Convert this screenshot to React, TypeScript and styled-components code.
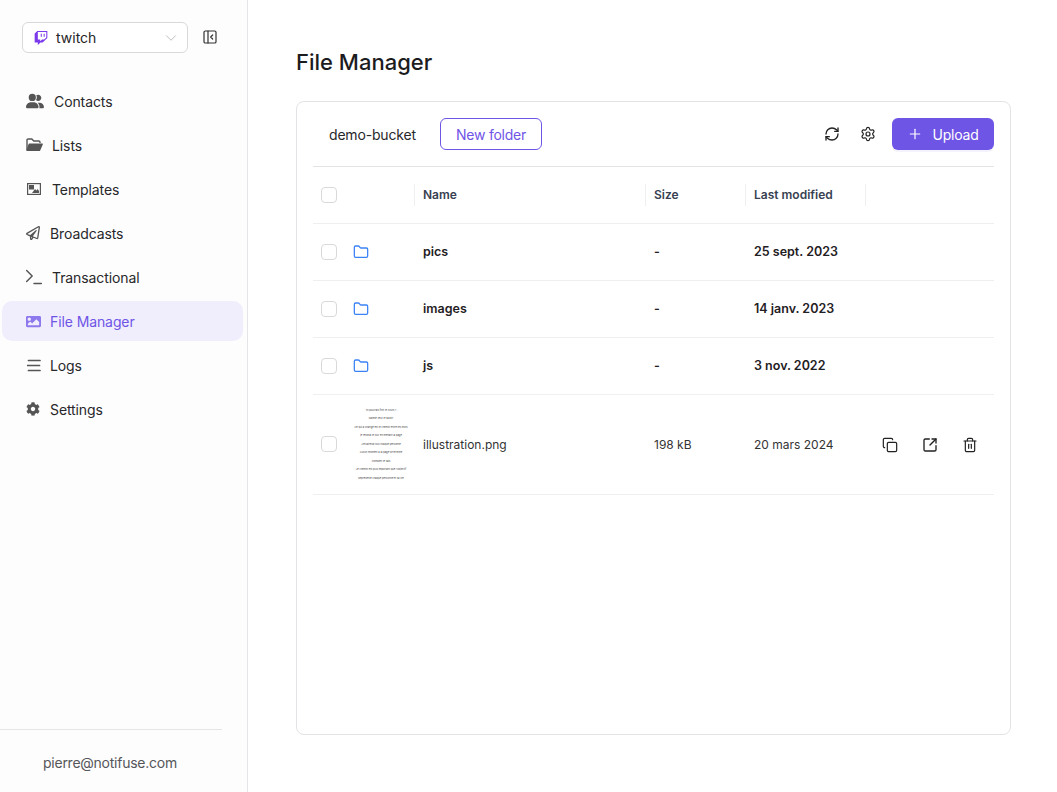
import React from "react";
import styled, { createGlobalStyle } from "styled-components";
import { FaTwitch, FaRegPaperPlane, FaImage, FaCog } from "react-icons/fa";
import { FaUserGroup } from "react-icons/fa6";
import { ChevronDown, PanelLeftClose, RefreshCw, Settings, Plus, Copy, SquareArrowOutUpRight, Trash2, Folder, Terminal } from "lucide-react";

const Global = createGlobalStyle`
  html, body { margin: 0; padding: 0; background: #fff; }
  body { font-family: Inter, "Liberation Sans", sans-serif; color: #1f2023; }
  * { box-sizing: border-box; }
`;
const Page = styled.div`display: flex; width: 1057px; height: 792px; overflow: hidden;`;
const Side = styled.aside`
  width: 248px; flex: none; background: #fdfdfd; border-right: 1px solid #e5e5e8;
  display: flex; flex-direction: column;
`;
const Top = styled.div`display: flex; align-items: center; padding: 22px 0 0 22px; gap: 14px; color: #333;`;
const CollapseIcon = styled.span`display: flex; margin-top: -2px;`;
const Select = styled.div`
  width: 166px; height: 31px; border: 1px solid #d9d9d9; border-radius: 6px; background: #fff;
  display: flex; align-items: center; padding: 0 7px 0 11px; gap: 8px; font-size: 14px; color: #262626;
  svg:first-child { color: #7c3aed; }
  span { flex: 1; }
  svg:last-child { color: #a8a8a8; }
`;
const Nav = styled.nav`display: flex; flex-direction: column; gap: 4px; padding: 28px 4px 0 2px; flex: 1;`;
const Item = styled.div<{ $active?: boolean }>`
  height: 40px; display: flex; align-items: center; gap: 10px; padding-left: 24px; border-radius: 10px;
  font-size: 14px; font-weight: 400; letter-spacing: -0.1px;
  color: ${p => (p.$active ? "#6f55e6" : "#28282b")};
  background: ${p => (p.$active ? "#f0edfd" : "transparent")};
  svg { color: ${p => (p.$active ? "#8e78ee" : "#555")}; flex: none; }
`;
const IconSlot = styled.span<{ $w: number }>`
  width: ${p => p.$w}px; display: flex; align-items: center; justify-content: flex-start;
`;
const Foot = styled.div`
  width: 222px; height: 63px; border-top: 1px solid #e5e5e8;
  padding-top: 24px; padding-left: 43px; font-size: 14px; letter-spacing: -0.25px; color: #55565a; line-height: 17px; white-space: nowrap;
`;
const Main = styled.main`flex: 1; padding: 0 46px 57px 48px; display: flex; flex-direction: column;`;
const Title = styled.h1`
  margin: 0; height: 101px; padding-top: 47px; font-size: 22px; line-height: 30px; font-weight: 500; color: #1c1c1f;
`;
const Card = styled.section`
  flex: 1; border: 1px solid #e3e3e6; border-radius: 8px; background: #fff; padding: 16px 16px 0;
`;
const Toolbar = styled.div`
  display: flex; align-items: center; height: 49px; padding-bottom: 17px; border-bottom: 1px solid #e3e3e6;
`;
const Bucket = styled.span`margin: 2px 0 0 16px; width: 111px; font-size: 14px; letter-spacing: -0.18px; color: #28282b;`;
const Outline = styled.button`
  width: 102px; height: 32px; border: 1px solid #6f55e6; border-radius: 6px; background: #fff;
  color: #6f55e6; font: 400 14px Inter, sans-serif; letter-spacing: -0.25px; padding: 2px 0 0;
`;
const Spacer = styled.div`flex: 1;`;
const ToolIcon = styled.span`display: flex; width: 36px; justify-content: center; color: #222;`;
const Primary = styled.button`
  margin-left: 6px; width: 102px; height: 32px; border: 0; border-radius: 6px; background: #6f55e6; color: #fff;
  font: 400 14px Inter, sans-serif; letter-spacing: -0.2px; display: flex; align-items: center; justify-content: center; gap: 9px; padding: 0;
  box-shadow: 0 2px 0 rgba(111,85,230,.08);
  span { margin-top: 2px; }
`;
const Row = styled.div<{ $h: number }>`
  display: grid; grid-template-columns: 32px 69px 231px 100px 120px 1fr; align-items: center;
  height: ${p => p.$h}px; border-bottom: 1px solid #efeff1; font-size: 12px; color: #1f2023;
`;
const HeadCell = styled.div<{ $sep?: boolean }>`
  height: 22px; line-height: 22px; padding-left: 8px; font-size: 12px; font-weight: 600; color: #374151;
  border-left: ${p => (p.$sep ? "1px solid #efeff1" : "0")};
`;
const Check = styled.span<{ $lift?: boolean }>`
  display: block; width: 16px; height: 16px; margin: 0 0 ${p => (p.$lift ? 2 : 0)}px 8px;
  border: 1px solid #d9d9d9; border-radius: 4px; background: #fff;
`;
const Cell = styled.div<{ $bold?: boolean }>`
  padding: 0 0 ${p => (p.$bold ? 2 : 0)}px 9px; font-size: ${p => (p.$bold ? 12.5 : 12)}px; font-weight: ${p => (p.$bold ? 600 : 400)};
  color: ${p => (p.$bold ? "#1f2023" : "#333")};
`;
const IconCell = styled.div`padding-left: 8px; display: flex; color: #3b82f6;`;
const Thumb = styled.div`
  width: 56px; margin-left: 8px; display: flex; flex-direction: column; align-items: center; gap: 4.5px;
  font-size: 2.5px; line-height: 4px; color: #444; white-space: nowrap;
`;
const Actions = styled.div`display: flex; gap: 24px; padding-left: 17px; color: #222;`;

const ListsIcon = () => (
  <svg width="17" height="14" viewBox="0 0 17 14">
    <path d="M1 12V2.2C1 1.5 1.5 1 2.2 1h3.6l2 2h5c.7 0 1.2.5 1.2 1.2V5" fill="none" stroke="currentColor" strokeWidth="1.4" />
    <path d="M3.4 5.600h12.900c.4 0 .7.4.5.8l-2.600 6c-.2.4-.6.6-1 .6H.9c-.4 0-.7-.4-.5-.8l2-5.800c.2-.5.6-.8 1-.8z" fill="currentColor" />
  </svg>
);
const TemplatesIcon = () => (
  <svg width="14" height="12" viewBox="0 0 14 12" style={{ marginLeft: 1 }}>
    <rect x="0.6" y="0.6" width="12.8" height="10.8" fill="none" stroke="currentColor" strokeWidth="1.2" />
    <rect x="2" y="2" width="5" height="4.500" fill="currentColor" />
    <path d="M5 10l3-4 1.500 1.500L10.500 6 12 8v2z" fill="currentColor" />
  </svg>
);
const LogsIcon = () => (
  <svg width="14" height="13" viewBox="0 0 14 13" style={{ marginLeft: 1 }}>
    <path d="M1.500 1.500h11.500M0.500 6.500h12M1.500 11.500h11.500" fill="none" stroke="currentColor" strokeWidth="1.700" strokeLinecap="round" />
  </svg>
);

const nav = [
  { label: "Contacts", w: 18, icon: <FaUserGroup size={18} /> },
  { label: "Lists", w: 16, icon: <ListsIcon /> },
  { label: "Templates", w: 16, icon: <TemplatesIcon /> },
  { label: "Broadcasts", w: 14, icon: <FaRegPaperPlane size={14} /> },
  { label: "Transactional", w: 16, icon: <Terminal size={22} strokeWidth={1.6} style={{ marginLeft: -3 }} /> },
  { label: "File Manager", w: 14, icon: <FaImage size={15} />, active: true },
  { label: "Logs", w: 14, icon: <LogsIcon /> },
  { label: "Settings", w: 14, icon: <FaCog size={14} /> },
];
const folders = [
  ["pics", "25 sept. 2023"],
  ["images", "14 janv. 2023"],
  ["js", "3 nov. 2022"],
];
const thumbLines = [
  "Tu pourrais finir le cours ?",
  "Mamie veut le savoir",
  "Ce qui a changé est le chemin entre les mots",
  "je rendrai le jour en mettant la page",
  "J'éclairerai tout chaque personne",
  "Aucun moment à la page se termine",
  "Combien le sais",
  "Le chemin est plus important que l'objectif",
  "Représente chaque personne et sa vie",
];

export default function App() {
  return (
    <>
      <Global />
      <Page>
        <Side>
          <Top>
            <Select>
              <FaTwitch size={14} />
              <span>twitch</span>
              <ChevronDown size={18} strokeWidth={1} />
            </Select>
            <CollapseIcon><PanelLeftClose size={16} strokeWidth={1.8} /></CollapseIcon>
          </Top>
          <Nav>
            {nav.map(n => (
              <Item key={n.label} $active={n.active}>
                <IconSlot $w={n.w}>{n.icon}</IconSlot>
                {n.label}
              </Item>
            ))}
          </Nav>
          <Foot>pierre@notifuse.com</Foot>
        </Side>
        <Main>
          <Title>File Manager</Title>
          <Card>
            <Toolbar>
              <Bucket>demo-bucket</Bucket>
              <Outline>New folder</Outline>
              <Spacer />
              <ToolIcon><RefreshCw size={16} strokeWidth={2} /></ToolIcon>
              <ToolIcon><Settings size={16} strokeWidth={1.8} /></ToolIcon>
              <Primary><Plus size={16} strokeWidth={1.8} /><span>Upload</span></Primary>
            </Toolbar>
            <Row $h={57}>
              <div><Check /></div>
              <div />
              <HeadCell $sep>Name</HeadCell>
              <HeadCell $sep>Size</HeadCell>
              <HeadCell $sep>Last modified</HeadCell>
              <HeadCell $sep />
            </Row>
            {folders.map(([name, date]) => (
              <Row $h={57} key={name}>
                <div><Check /></div>
                <IconCell><Folder size={16} strokeWidth={1.9} /></IconCell>
                <Cell $bold>{name}</Cell>
                <Cell $bold>-</Cell>
                <Cell $bold>{date}</Cell>
                <div />
              </Row>
            ))}
            <Row $h={100}>
              <div><Check $lift /></div>
              <Thumb>{thumbLines.map(l => <span key={l}>{l}</span>)}</Thumb>
              <Cell>illustration.png</Cell>
              <Cell>198 kB</Cell>
              <Cell>20 mars 2024</Cell>
              <Actions>
                <Copy size={16} strokeWidth={1.8} />
                <SquareArrowOutUpRight size={16} strokeWidth={2} />
                <Trash2 size={16} strokeWidth={1.8} />
              </Actions>
            </Row>
          </Card>
        </Main>
      </Page>
    </>
  );
}
